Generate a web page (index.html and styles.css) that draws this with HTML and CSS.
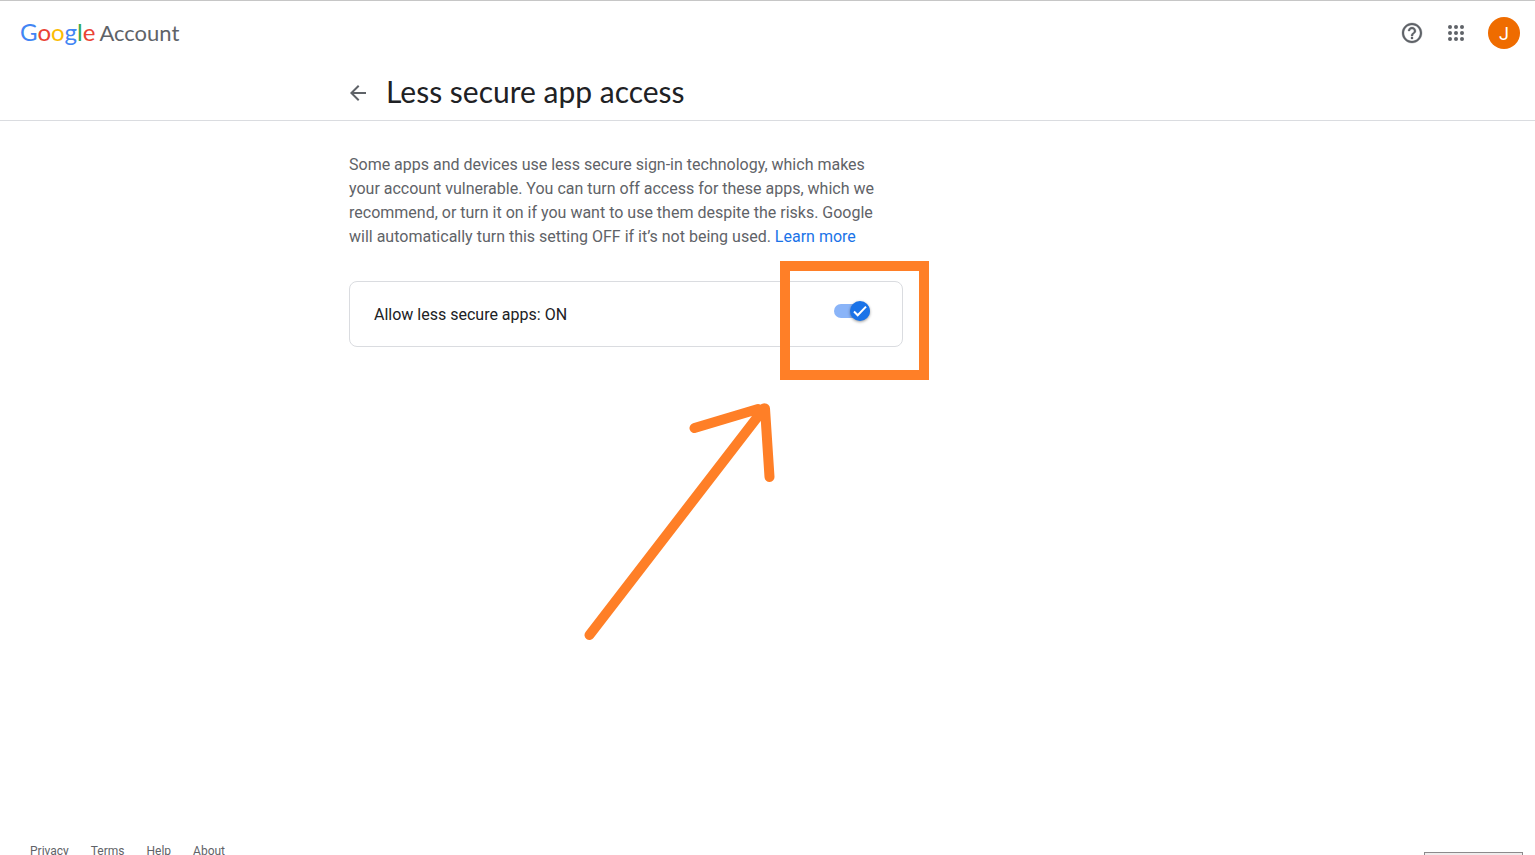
FILE: index.html
```html
<!DOCTYPE html>
<html lang="en">
<head>
    <meta charset="UTF-8">
    <meta name="viewport" content="width=device-width, initial-scale=1.0">
    <title>Less secure app access</title>
    <link rel="stylesheet" href="styles.css">
</head>
<body>
    <header class="topbar">
        <a class="logo" href="#" aria-label="Google Account"><span class="logo-google"><span class="blue">G</span><span class="red">o</span><span class="yellow">o</span><span class="blue">g</span><span class="green">l</span><span class="red">e</span></span><span class="logo-account">Account</span></a>
        <div class="actions">
            <button class="icon-button" type="button" aria-label="Help">
                <svg width="24" height="24" viewBox="0 0 24 24" fill="#5f6368" stroke="#5f6368" stroke-width=".3"><path d="M11 18h2v-2h-2v2zm1-16C6.480 2 2 6.480 2 12s4.480 10 10 10 10-4.480 10-10S17.520 2 12 2zm0 18c-4.410 0-8-3.590-8-8s3.590-8 8-8 8 3.590 8 8-3.590 8-8 8zm0-14c-2.210 0-4 1.790-4 4h2c0-1.100.9-2 2-2s2 .9 2 2c0 2-3 1.750-3 5h2c0-2.250 3-2.500 3-5 0-2.210-1.790-4-4-4z"/></svg>
            </button>
            <button class="icon-button" type="button" aria-label="Google apps">
                <svg width="24" height="24" viewBox="0 0 24 24" fill="#5f6368">
                    <circle cx="6" cy="6" r="2"/><circle cx="12" cy="6" r="2"/><circle cx="18" cy="6" r="2"/>
                    <circle cx="6" cy="12" r="2"/><circle cx="12" cy="12" r="2"/><circle cx="18" cy="12" r="2"/>
                    <circle cx="6" cy="18" r="2"/><circle cx="12" cy="18" r="2"/><circle cx="18" cy="18" r="2"/>
                </svg>
            </button>
            <button class="avatar" type="button">J</button>
        </div>
    </header>

    <div class="title-bar">
        <div class="container title-row">
            <a class="back" href="#" aria-label="Back">
                <svg width="24" height="24" viewBox="0 0 24 24" fill="#5f6368"><path d="M20 11H7.830l5.590-5.590L12 4l-8 8 8 8 1.410-1.410L7.830 13H20v-2z"/></svg>
            </a>
            <h1>Less secure app access</h1>
        </div>
    </div>

    <main class="container">
        <p class="intro">
            Some apps and devices use less secure sign-in technology, which makes your account vulnerable.
            You can turn off access for these apps, which we recommend, or turn it on if you want to use them despite the risks.
            Google will automatically turn this setting OFF if it’s not being used.
            <a href="#">Learn more</a>
        </p>
        <div class="card">
            <label for="allowApps">Allow less secure apps: ON</label>
            <span class="switch">
                <input type="checkbox" id="allowApps" checked>
                <svg class="check" width="20" height="20" viewBox="0 0 20 20" fill="none" stroke="#fff" stroke-width="2"><path d="M4 10.500l3.700 3.700 8.300-8.600"/></svg>
            </span>
            <div class="highlight"></div>
            <svg class="arrow" width="200" height="250" viewBox="0 0 200 250" fill="none" stroke="#ff7f27" stroke-width="10" stroke-linecap="round" stroke-linejoin="round">
                <path d="M9.500 235L184 8.500M114.500 28L178 9M185 8.500L189.500 77"/>
            </svg>
        </div>
    </main>

    <footer class="footer">
        <a href="#">Privacy</a>
        <a href="#">Terms</a>
        <a href="#">Help</a>
        <a href="#">About</a>
    </footer>
    <div class="tooltip"></div>
</body>
</html>
```
FILE: styles.css
```css
* {
    box-sizing: border-box;
}
body {
    display: flex;
    flex-direction: column;
    height: 100vh;
    margin: 0;
    overflow: hidden;
    border-top: 1px solid #c6c6c6;
    background-color: #fff;
    color: #202124;
    font-family: Roboto, Arial, sans-serif;
    font-size: 16px;
}
a {
    color: #1a73e8;
    text-decoration: none;
}
button {
    padding: 0;
    border: none;
    background: none;
    cursor: pointer;
}
.container {
    width: 100%;
    max-width: 837px;
    margin: 0 auto;
}

/* Top bar */
.topbar {
    display: flex;
    align-items: center;
    justify-content: space-between;
    height: 64px;
    padding: 0 15px 0 20px;
}
.logo {
    display: flex;
    align-items: baseline;
    gap: 4px;
    padding-bottom: 4px;
    font-family: Lato, sans-serif;
}
.logo-google {
    font-size: 24px;
}
.logo-account {
    font-size: 22px;
    color: #5f6368;
}
.blue {
    color: #4285f4;
}
.red {
    color: #ea4335;
}
.yellow {
    color: #fbbc05;
}
.green {
    color: #34a853;
}
.actions {
    display: flex;
    align-items: center;
    gap: 4px;
}
.icon-button {
    display: flex;
    align-items: center;
    justify-content: center;
    width: 40px;
    height: 40px;
    border-radius: 50%;
}
.avatar {
    width: 32px;
    height: 32px;
    margin-left: 8px;
    border-radius: 50%;
    background-color: #ef6c00;
    color: #fff;
    font-family: Roboto, Arial, sans-serif;
    font-size: 18px;
}

/* Page title */
.title-bar {
    border-bottom: 1px solid #dadce0;
}
.title-row {
    display: flex;
    align-items: center;
    gap: 16px;
    height: 55px;
}
.back {
    display: flex;
    margin-left: -3px;
}
h1 {
    margin: 0;
    padding-bottom: 4px;
    font-family: Lato, sans-serif;
    font-size: 30px;
    font-weight: 400;
    line-height: 36px;
}

/* Content */
main {
    flex: 1;
}
.intro {
    max-width: 540px;
    margin: 32px 0;
    color: #5f6368;
    line-height: 24px;
}
.card {
    position: relative;
    display: flex;
    align-items: flex-start;
    justify-content: space-between;
    max-width: 554px;
    padding: 19px 32px 17px 24px;
    border: 1px solid #dadce0;
    border-radius: 8px;
    line-height: 28px;
}
.switch {
    position: relative;
    width: 36px;
    height: 20px;
}
.switch input {
    appearance: none;
    display: block;
    width: 36px;
    height: 14px;
    margin: 3px 0;
    border-radius: 7px;
    background-color: #8ab4f8;
    cursor: pointer;
}
.check {
    position: absolute;
    top: 0;
    right: 0;
    border-radius: 50%;
    background-color: #1a73e8;
    box-shadow: 0 1px 3px rgba(0, 0, 0, 0.4);
    pointer-events: none;
}

/* Orange marks over the card */
.highlight {
    position: absolute;
    top: -21px;
    right: -27px;
    width: 149px;
    height: 119px;
    border: 10px solid #ff7f27;
    pointer-events: none;
}
.arrow {
    position: absolute;
    top: 118px;
    right: 122px;
    pointer-events: none;
}

.footer {
    display: flex;
    gap: 22px;
    height: 12px;
    padding: 0 30px;
    font-size: 12px;
    line-height: 16px;
}
.footer a {
    color: #5f6368;
}
.tooltip {
    position: fixed;
    right: 12px;
    bottom: 0;
    width: 99px;
    height: 3px;
    border: 1px solid #8c8a8c;
    border-bottom: none;
    background-color: #f0ecec;
}
```
